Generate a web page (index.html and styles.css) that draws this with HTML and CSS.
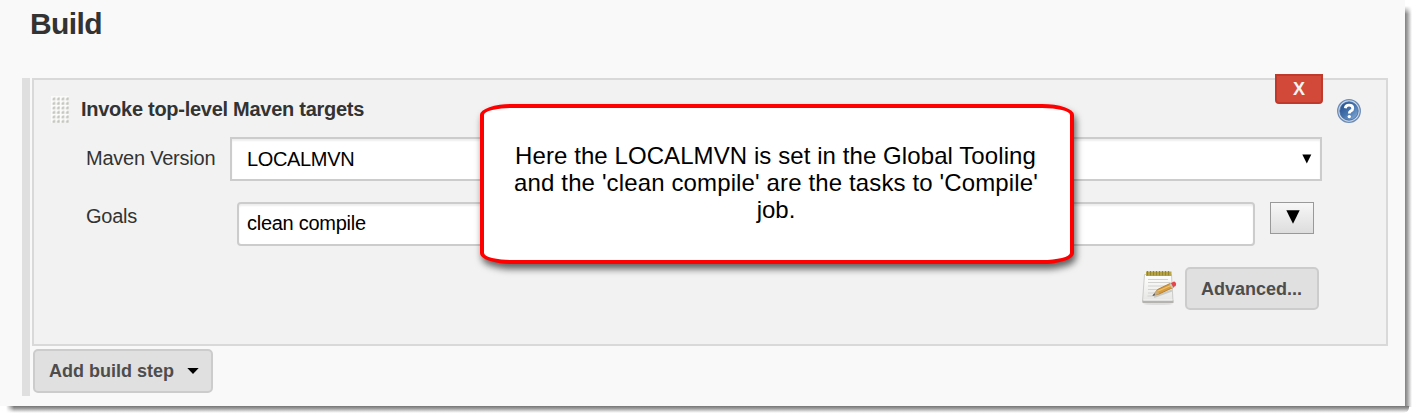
FILE: index.html
```html
<!DOCTYPE html>
<html lang="en">
<head>
<meta charset="utf-8">
<title>Build</title>
<link rel="stylesheet" href="styles.css">
</head>
<body>
<main class="page">
  <h1 class="heading">Build</h1>
  <div class="steps">
    <section class="step">
      <header class="step-head">
        <svg class="handle" width="18" height="28" viewBox="0 0 18 28" aria-hidden="true">
          <defs>
            <pattern id="grip" width="4.5" height="4.5" patternUnits="userSpaceOnUse">
              <rect width="4.5" height="4.5" fill="#fbfbfa"/>
              <path d="M1.5 4.2V2.8L3 1.4h1.2v2.8z" fill="#c3c3bf"/>
            </pattern>
          </defs>
          <rect width="18" height="27" fill="url(#grip)"/>
        </svg>
        <h2 class="step-title">Invoke top-level Maven targets</h2>
      </header>
      <button class="delete">X</button>
      <svg class="help" width="26" height="26" viewBox="0 0 26 26" role="img" aria-label="Help">
        <defs>
          <linearGradient id="ball" x1="0" y1="0" x2="1" y2="1">
            <stop offset="0" stop-color="#204a87"/><stop offset=".5" stop-color="#4473ae"/><stop offset="1" stop-color="#8fb4dc"/>
          </linearGradient>
        </defs>
        <circle cx="13" cy="13" r="11.3" fill="#cbd8e8" stroke="#6c8cb6" stroke-width="1.3"/>
        <circle cx="13" cy="13" r="9.2" fill="url(#ball)" stroke="#3d67a0" stroke-width=".8"/>
        <path d="M9.3 10.2Q9.7 7.2 13 7.2q3.800 0 3.800 3 0 1.700-2 2.800-1.500.9-1.500 2.400" fill="none" stroke="#fff" stroke-width="2.8"/>
        <circle cx="13.300" cy="18.600" r="1.700" fill="#fff"/>
      </svg>
      <div class="row row-version">
        <label class="label">Maven Version</label>
        <div class="select"><span class="value">LOCALMVN</span>
          <svg width="10" height="10" viewBox="0 0 10 10"><path d="M.3.5h9L4.800 9.500z"/></svg>
        </div>
      </div>
      <div class="row row-goals">
        <label class="label">Goals</label>
        <div class="input"><span class="goal">clean compile</span></div>
        <button class="expand"><svg width="14" height="14" viewBox="0 0 14 14"><path d="M.3.3h13.400L7 13.700z"/></svg></button>
      </div>
      <div class="row row-advanced">
        <svg class="notepad" width="36" height="36" viewBox="0 0 36 36" aria-hidden="true">
          <defs>
            <linearGradient id="paper" x1="0" y1="0" x2="0" y2="1">
              <stop offset="0" stop-color="#fff"/><stop offset="1" stop-color="#e5e5e3"/>
            </linearGradient>
          </defs>
          <ellipse cx="17" cy="33.800" rx="15" ry="1.200" fill="#ddd"/>
          <path d="M3.500 4.500h27l1.500 27H1.500z" fill="url(#paper)" stroke="#c2c2bf" stroke-width=".8"/>
          <path d="M1.500 30.500h31V33h-31z" fill="#b4b3b0"/>
          <path d="M2.500 30h29" stroke="#f5f5f3"/>
          <path d="M7 9.500h20M7 12.500h22M7 16h17M7 19.500h10M7 23h8M6.500 26h6" stroke="#d2d2d0" stroke-width="1.100"/>
          <path d="M5 1.500h25.500v4.500H5z" fill="#b9a64b"/>
          <path d="M6.500 1v4.500M9.500 1v4.500M12.500 1v4.500M15.500 1v4.500M18.500 1v4.500M21.500 1v4.500M24.500 1v4.500M27.500 1v4.500" stroke="#95852f" stroke-width="1.200"/>
          <path d="M13 27l18-6.500" stroke="#c9c9c5" stroke-width="2"/>
          <path d="M12 25.500l4.500-6L30 13l2.300 4.500L18 24z" fill="#d99c3c" stroke="#a97328" stroke-width=".8"/>
          <path d="M17 21l14-6" stroke="#efc46d" stroke-width="1.200"/>
          <path d="M12 25.500l4.500-6 1.500 4.500z" fill="#c8ad7e"/><path d="M11.300 26l2-2.600.8 1.500z" fill="#555"/>
          <path d="M28.500 13.700l1.600-.8 2.300 4.500-1.700.8z" fill="#c9c9c5"/>
          <path d="M30 12.900l3-1.300q1.500 0 2 1.800.4 1.800-.5 2.700l-2.200 1.200z" fill="#e4454a"/>
        </svg>
        <button class="button advanced"><span>Advanced...</span></button>
      </div>
      <aside class="callout">
        <p class="c1">Here the LOCALMVN is set in the Global Tooling</p>
        <p class="c2">and the 'clean compile' are the tasks to 'Compile'</p>
        <p class="c3">job.</p>
      </aside>
    </section>
    <button class="button add"><span>Add build step</span>
      <svg width="12" height="6" viewBox="0 0 12 6"><path d="M.3 0h11.400L6 6z"/></svg>
    </button>
  </div>
</main>
</body>
</html>
```
FILE: styles.css
```css
* { box-sizing: border-box; }
html { background: #fff; }
body { margin: 0; width: 1419px; height: 420px; overflow: hidden; font: 20px/24px "Liberation Sans", Arial, sans-serif; color: #333; }
h1, h2, p { margin: 0; }
svg { display: block; flex: none; }
button { margin: 0; padding: 0; font: inherit; }
.page { position: relative; width: 1405px; height: 406px; padding: 6px 17px 10px 22px; background: #f9f9f9; }
/* soft drop shadow along the right and bottom edges */
.page::before { content: ""; position: absolute; left: 100%; top: 6px; width: 7px; height: 401px; background: linear-gradient(90deg, #808080, #a4a4a4 35%, #dedede 75%, #fff); -webkit-mask-image: linear-gradient(transparent, #000 8px); mask-image: linear-gradient(transparent, #000 8px); }
.page::after { content: ""; position: absolute; left: 6px; top: 100%; width: 1403px; height: 7px; background: linear-gradient(#747474, #9c9c9c 35%, #dedede 75%, #fff); border-radius: 0 0 5px 0; -webkit-mask-image: linear-gradient(90deg, transparent, #000 8px); mask-image: linear-gradient(90deg, transparent, #000 8px); }
.heading { height: 72px; padding-left: 8px; font-size: 30px; line-height: 36px; letter-spacing: -.6px; }
.steps { height: 318px; border-left: 8px solid #dfdfdf; padding-left: 2px; }
.step { position: relative; height: 268px; border: 2px solid #d9d9d9; background: #f2f2f2; padding: 16px 64px 0 17px; }
.step-head { display: flex; height: 41px; }
.step-title { margin: -1px 0 0 12px; font-size: 20px; line-height: 28px; letter-spacing: -.27px; white-space: nowrap; }
.delete { position: absolute; left: 1241px; top: -6px; width: 48px; height: 30px; border: 2px solid #bf3a2b; border-radius: 0 0 4px 4px; background: #d24939; color: #f4f4f4; font-weight: bold; font-size: 18px; }
.help { position: absolute; left: 1302px; top: 18px; }
.row { display: flex; white-space: nowrap; }
.row-version { height: 65px; }
.row-goals { height: 64px; }
.label { padding: 9px 0 0 35px; letter-spacing: -.23px; }
.row-version .label { width: 179px; }
.row-goals .label { width: 186px; padding-top: 2px; }
.value { letter-spacing: -.35px; }
.goal { letter-spacing: -.27px; }
.select { display: flex; align-items: center; justify-content: space-between; width: 1092px; height: 44px; padding: 0 8px 0 15px; border: 2px solid #ccc; background: #fff; color: #000; box-shadow: inset 0 2px 2px #eee; }
.input { width: 1018px; height: 44px; padding: 7px 8px; border: 2px solid #ccc; border-radius: 4px; background: #fff; color: #000; box-shadow: inset 0 2px 2px #eee; }
.expand { display: flex; justify-content: center; width: 44px; height: 32px; margin-left: 15px; padding: 7px 0 0 1px; border: 1px solid #999; background: linear-gradient(#f7f7f7, #ddd); }
.row-advanced { justify-content: flex-end; gap: 8px; padding-top: 1px; margin-right: 3px; }
.notepad { margin-top: 3px; }
.button { display: flex; align-items: center; border: 2px solid #ccc; border-radius: 5px; background: #e0e0e0; color: #4d4d4d; font-size: 18px; font-weight: bold; white-space: nowrap; }
.advanced { width: 134px; height: 43px; padding-left: 14px; }
.add { width: 180px; height: 44px; margin: 3px 0 0 1px; padding-left: 14px; gap: 13px; }
.callout { position: absolute; left: 446px; top: 24px; width: 594px; height: 160px; padding-top: 34px; border: 4px solid #f00; border-radius: 32px / 11px; background: #fff; box-shadow: 2px 5px 7px #0009; color: #000; font-size: 24px; line-height: 27px; text-align: center; white-space: nowrap; }
.c1 { margin-left: -3px; letter-spacing: .08px; }
.c2 { margin-left: -2px; letter-spacing: .13px; }
.c3 { margin-left: -2px; }
```
